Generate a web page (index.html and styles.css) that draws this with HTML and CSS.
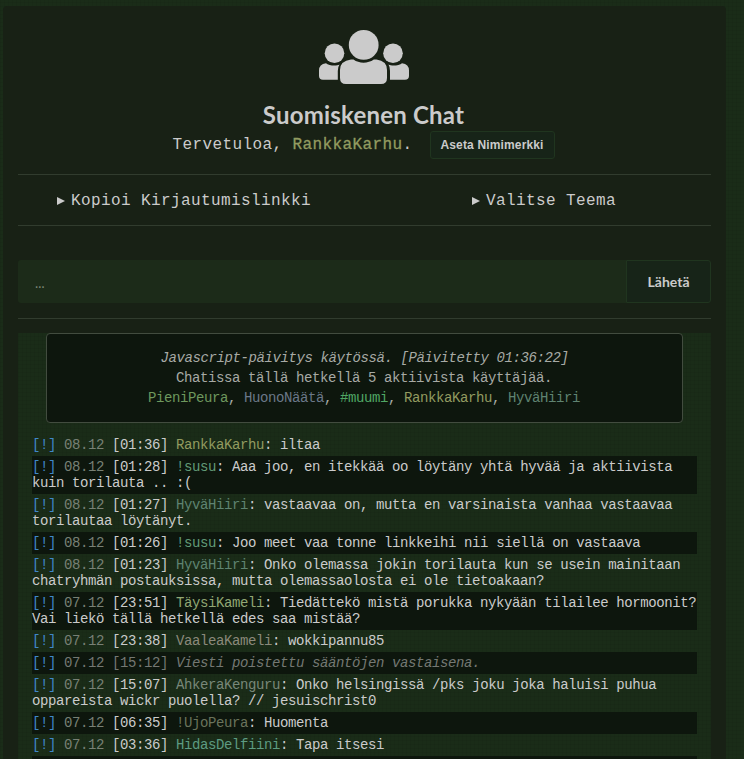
FILE: index.html
```html
<!DOCTYPE html>
<html lang="fi">
<head>
<meta charset="utf-8">
<title>Suomiskenen Chat</title>
<link rel="stylesheet" href="styles.css">
</head>
<body>
<main class="card">
  <header class="header">
    <svg class="logo" viewBox="0 0 90 54" width="90" height="54" fill="#cbcbcb">
      <circle cx="15.5" cy="23.3" r="9.8"/>
      <circle cx="74" cy="23.3" r="9.8"/>
      <path d="M7 33.2C9.500 35.500 17 36.500 20.500 34.600Q18.800 37 18.800 41V49.700H4Q0 49.700 0 46V40.500Q0 34 7 33.200Z"/>
      <path d="M83 33.200C80.500 35.500 73 36.500 69.500 34.600Q71 37 71 41V49.700H86Q90 49.700 90 46V40.500Q90 34 83 33.200Z"/>
      <circle cx="44.700" cy="14.900" r="14.900"/>
      <path d="M32 29.600H34.500C40 33.800 49 33.800 54.800 29.600H57.500Q68 31 68 40V48Q68 54 62 54H27Q21 54 21 48V40Q21 31 32 29.600Z"/>
    </svg>
    <h1 class="title">Suomiskenen Chat</h1>
    <div class="welcome"><span>Tervetuloa, <b class="me">RankkaKarhu</b>.</span><button class="nick-button">Aseta Nimimerkki</button></div>
  </header>
  <nav class="menu">
    <div class="menu-item"><svg width="8" height="8" viewBox="0 0 8 8"><path d="M0 0L8 4L0 8Z"/></svg>Kopioi Kirjautumislinkki</div>
    <div class="menu-item theme"><svg width="8" height="8" viewBox="0 0 8 8"><path d="M0 0L8 4L0 8Z"/></svg>Valitse Teema</div>
  </nav>
  <form class="composer">
    <input class="message-input" type="text" placeholder="…">
    <button class="send" type="button">Lähetä</button>
  </form>
  <section class="chat">
    <div class="status">
      <div class="updated">Javascript-päivitys käytössä. [Päivitetty 01:36:22]</div>
      <div class="online">Chatissa tällä hetkellä 5 aktiivista käyttäjää.</div>
      <div class="online"><span class="pieni">PieniPeura</span>, <span class="huono">HuonoNäätä</span>, <span class="muumi">#muumi</span>, <span class="rankka">RankkaKarhu</span>, <span class="hyva">HyväHiiri</span></div>
    </div>
    <div class="messages">
      <div class="row"><a>[!]</a> <time>08.12</time> [01:36] <span class="rankka">RankkaKarhu</span>: iltaa</div>
      <div class="row"><a>[!]</a> <time>08.12</time> [01:28] <span class="susu">!susu</span>: Aaa joo, en itekkää oo löytäny yhtä hyvää ja aktiivista kuin torilauta .. :(</div>
      <div class="row"><a>[!]</a> <time>08.12</time> [01:27] <span class="hyva">HyväHiiri</span>: vastaavaa on, mutta en varsinaista vanhaa vastaavaa torilautaa löytänyt.</div>
      <div class="row"><a>[!]</a> <time>08.12</time> [01:26] <span class="susu">!susu</span>: Joo meet vaa tonne linkkeihi nii siellä on vastaava</div>
      <div class="row"><a>[!]</a> <time>08.12</time> [01:23] <span class="hyva">HyväHiiri</span>: Onko olemassa jokin torilauta kun se usein mainitaan chatryhmän postauksissa, mutta olemassaolosta ei ole tietoakaan?</div>
      <div class="row"><a>[!]</a> <time>07.12</time> [23:51] <span class="taysi">TäysiKameli</span>: Tiedättekö mistä porukka nykyään tilailee hormoonit? Vai liekö tällä hetkellä edes saa mistää?</div>
      <div class="row"><a>[!]</a> <time>07.12</time> [23:38] <span class="vaalea">VaaleaKameli</span>: wokkipannu85</div>
      <div class="row removed"><a>[!]</a> <time>07.12</time> [15:12] <em>Viesti poistettu sääntöjen vastaisena.</em></div>
      <div class="row"><a>[!]</a> <time>07.12</time> [15:07] <span class="ahkera">AhkeraKenguru</span>: Onko helsingissä /pks joku joka haluisi puhua oppareista wickr puolella? // jesuischrist0</div>
      <div class="row"><a>[!]</a> <time>07.12</time> [06:35] <span class="ujo">!UjoPeura</span>: Huomenta</div>
      <div class="row"><a>[!]</a> <time>07.12</time> [03:36] <span class="hidas">HidasDelfiini</span>: Tapa itsesi</div>
      <div class="row"></div>
    </div>
  </section>
</main>
</body>
</html>
```
FILE: styles.css
```css
* { box-sizing: border-box; }

html, body { height: 100%; }

body {
  margin: 0;
  padding: 6px 18px 0 3px;
  overflow: hidden;
  background-color: #1a2c18;
  background-image:
    repeating-linear-gradient(0deg, rgba(0, 0, 0, .05) 0 1px, transparent 1px 4px),
    repeating-linear-gradient(90deg, rgba(0, 0, 0, .05) 0 1px, transparent 1px 4px);
  color: #cbcbcb;
  font: 16px/20px "Liberation Mono", monospace;
}

.card {
  height: 753px;
  padding: 24px 15px 0;
  overflow: hidden;
  border-radius: 4px 4px 0 0;
  background: #182115;
}

.header {
  display: flex;
  flex-direction: column;
  align-items: center;
  height: 144px;
  padding-right: 2px;
}

.logo { display: block; }

.title {
  margin: 16px 0 0;
  font: bold 24px/29px Lato, sans-serif;
  letter-spacing: .2px;
}

.welcome {
  display: flex;
  align-items: center;
  gap: 17px;
  height: 28px;
  margin-top: 2px;
  letter-spacing: .4px;
}

.me { color: #929b60; font-weight: normal; -webkit-text-stroke: .3px; }

.nick-button {
  width: 125px;
  height: 28px;
  padding: 0;
  border: 1px solid #20351f;
  border-radius: 3px;
  background: #172418;
  color: #cbcbcb;
  font: bold 12px "Liberation Sans", sans-serif;
  letter-spacing: .15px;
}

.menu {
  display: flex;
  height: 52px;
  border: solid #313c2e;
  border-width: 1px 0;
}

.menu-item {
  display: flex;
  align-items: center;
  gap: 6px;
  width: 415px;
  padding: 2px 0 0 39px;
  letter-spacing: .4px;
}

.menu-item.theme { width: 278px; }

.menu-item svg { margin-top: -1px; fill: #cbcbcb; }

.composer {
  display: flex;
  height: 93px;
  margin: 0 0 14px;
  padding: 34px 0 15px;
  border-bottom: 1px solid #313c2e;
}

.message-input {
  flex: 1;
  min-width: 0;
  padding: 4px 17px 0;
  border: 0;
  border-radius: 3px 0 0 3px;
  background: #1c2b19;
  color: #cbcbcb;
  font: 16px "Liberation Mono", monospace;
}

.message-input::placeholder { color: #7c8778; }

.send {
  width: 85px;
  padding: 0;
  border: 1px solid #20351f;
  border-radius: 0 3px 3px 0;
  background: #172418;
  color: #cbcbcb;
  font: bold 14px Lato, sans-serif;
}

.chat {
  height: 460px;
  padding: 0 14px;
  background-color: #1a2c18;
  background-image:
    repeating-linear-gradient(0deg, rgba(0, 0, 0, .05) 0 1px, transparent 1px 4px),
    repeating-linear-gradient(90deg, rgba(0, 0, 0, .05) 0 1px, transparent 1px 4px);
  font-size: 14px;
  letter-spacing: -.4px;
}

.status {
  height: 90px;
  margin: 0 14px 11px;
  padding: 14px 0;
  border: 1px solid #424c3f;
  border-radius: 4px;
  background: #0d160d;
  color: #a7aaa5;
  text-align: center;
}

.updated { font-style: italic; }
.online { padding-right: 1px; }

.row {
  min-height: 22px;
  padding: 3px 0;
  line-height: 16px;
}

.row:nth-child(even) { background: #0d160d; }

.row a { color: #4087c8; }
.row time { color: #788075; }
.removed, .removed time { color: #747873; }

.pieni { color: #6e985d; }
.huono { color: #6b7888; }
.muumi { color: #50a765; }
.rankka { color: #929b60; }
.hyva { color: #5f8371; }
.susu { color: #629b78; }
.taysi { color: #91a774; }
.vaalea { color: #8b897b; }
.ahkera { color: #788779; }
.ujo { color: #6a735b; }
.hidas { color: #5d9b82; }
```
